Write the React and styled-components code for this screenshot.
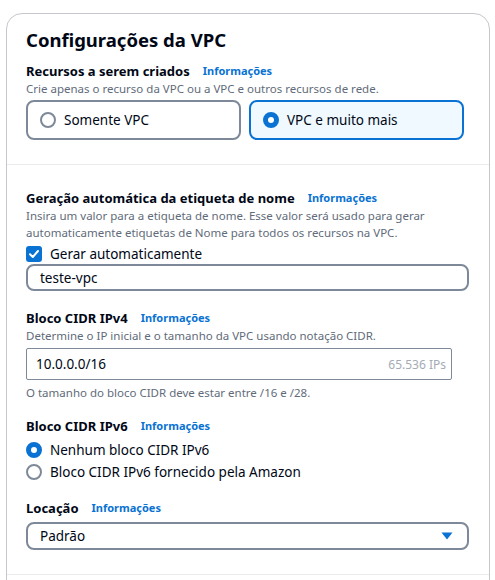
import React from "react";
import styled, { createGlobalStyle } from "styled-components";

const Global = createGlobalStyle`
  html, body { margin: 0; padding: 0; background: #ffffff; }
  body { font-family: "Noto Sans", "Open Sans", sans-serif; color: #000716; }
  * { box-sizing: border-box; }
`;

const Page = styled.div`
  padding: 13px 0 0 6px;
  width: 495px;
  height: 580px;
  overflow: hidden;
`;

const Card = styled.div`
  width: 484px;
  border: 1px solid #c6c6cd;
  border-radius: 16px;
  background: #fff;
`;

const Section = styled.div`
  padding: ${(p) => p.$pad || "0 19px"};
  border-bottom: ${(p) => (p.$divider ? "1px solid #e9ebed" : "none")};
`;

const Title = styled.h2`
  margin: 0;
  font-size: 18.5px;
  font-weight: 700;
  line-height: 24px;
  color: #000716;
`;

const Field = styled.div`
  display: flex;
  flex-direction: column;
  margin-top: ${(p) => p.$mt || 0}px;
`;

const LabelRow = styled.div`
  display: flex;
  align-items: center;
  gap: 13px;
  height: 18px;
  line-height: 18px;
`;

const Label = styled.span`
  font-size: 13px;
  font-weight: 700;
  color: #000716;
`;

const Info = styled.a`
  font-size: 11px;
  font-weight: 700;
  color: #0972d3;
  text-decoration: none;
`;

const Desc = styled.div`
  font-size: 11.5px;
  line-height: 17px;
  color: #5f6b7a;
  margin-top: ${(p) => p.$mt || 0}px;
`;

const Tiles = styled.div`
  display: grid;
  grid-template-columns: 215px 215px;
  gap: 8px;
  margin-top: 3px;
`;

const Tile = styled.div`
  display: flex;
  align-items: center;
  gap: 8px;
  height: 40px;
  padding: 0 12px;
  border: 2px solid ${(p) => (p.$checked ? "#0972d3" : "#7d8998")};
  border-radius: 8px;
  background: ${(p) => (p.$checked ? "#f0f9ff" : "#fff")};
  font-size: 13.5px;
  color: #000716;
`;

const RadioDot = styled.span`
  flex: none;
  width: 16px;
  height: 16px;
  border-radius: 50%;
  border: ${(p) => (p.$checked ? "5px solid #0972d3" : "2px solid #7d8998")};
  background: #fff;
`;

const OptionList = styled.div`
  display: flex;
  flex-direction: column;
  gap: 2px;
  margin-top: ${(p) => p.$mt || 0}px;
`;

const Option = styled.label`
  display: flex;
  align-items: center;
  gap: 8px;
  height: 20px;
  font-size: 13.5px;
  line-height: 20px;
  color: #000716;
`;

const CheckBox = styled.span`
  flex: none;
  width: 16px;
  height: 16px;
  border-radius: 3px;
  background: #0972d3;
  display: flex;
  align-items: center;
  justify-content: center;
`;

const RoundInput = styled.div`
  display: flex;
  align-items: center;
  height: ${(p) => p.$h || 27}px;
  width: 443px;
  padding: 0 12px;
  border: 2px solid #7d8998;
  border-radius: 8px;
  font-size: 13.5px;
  color: #000716;
  margin-top: ${(p) => p.$mt || 0}px;
`;

const SquareInput = styled.div`
  display: flex;
  align-items: center;
  justify-content: space-between;
  height: 32px;
  width: 426px;
  padding: 0 5px 0 9px;
  border: 1px solid #7d8998;
  border-radius: 2px;
  font-size: 13.5px;
  color: #000716;
  margin-top: 4px;
`;

const Hint = styled.span`
  font-size: 12px;
  color: #a4abb5;
`;

const Caret = styled.svg`
  margin-left: auto;
  margin-right: 2px;
`;

export default function App() {
  return (
    <>
      <Global />
      <Page>
        <Card>
          <Section $pad="14px 19px 24px" $divider>
            <Title>Configurações da VPC</Title>
            <Field $mt={10}>
              <LabelRow>
                <Label>Recursos a serem criados</Label>
                <Info>Informações</Info>
              </LabelRow>
              <Desc>Crie apenas o recurso da VPC ou a VPC e outros recursos de rede.</Desc>
              <Tiles>
                <Tile>
                  <RadioDot />
                  Somente VPC
                </Tile>
                <Tile $checked>
                  <RadioDot $checked />
                  VPC e muito mais
                </Tile>
              </Tiles>
            </Field>
          </Section>
          <Section $pad="24px 19px 24px" $divider>
            <Field>
              <LabelRow>
                <Label>Geração automática da etiqueta de nome</Label>
                <Info>Informações</Info>
              </LabelRow>
              <Desc>
                Insira um valor para a etiqueta de nome. Esse valor será usado para gerar
                automaticamente etiquetas de Nome para todos os recursos na VPC.
              </Desc>
              <OptionList $mt={3}>
                <Option>
                  <CheckBox>
                    <svg width="12" height="12" viewBox="0 0 12 12">
                      <path d="M2 6.2 L4.8 9 L10 3" fill="none" stroke="#fff" strokeWidth="2" strokeLinecap="round" strokeLinejoin="round" />
                    </svg>
                  </CheckBox>
                  Gerar automaticamente
                </Option>
              </OptionList>
              <RoundInput>teste-vpc</RoundInput>
            </Field>
            <Field $mt={18}>
              <LabelRow>
                <Label>Bloco CIDR IPv4</Label>
                <Info>Informações</Info>
              </LabelRow>
              <Desc>Determine o IP inicial e o tamanho da VPC usando notação CIDR.</Desc>
              <SquareInput>
                10.0.0.0/16
                <Hint>65.536 IPs</Hint>
              </SquareInput>
              <Desc $mt={4}>O tamanho do bloco CIDR deve estar entre /16 e /28.</Desc>
            </Field>
            <Field $mt={16}>
              <LabelRow>
                <Label>Bloco CIDR IPv6</Label>
                <Info>Informações</Info>
              </LabelRow>
              <OptionList $mt={5}>
                <Option>
                  <RadioDot $checked />
                  Nenhum bloco CIDR IPv6
                </Option>
                <Option>
                  <RadioDot />
                  Bloco CIDR IPv6 fornecido pela Amazon
                </Option>
              </OptionList>
            </Field>
            <Field $mt={17}>
              <LabelRow>
                <Label>Locação</Label>
                <Info>Informações</Info>
              </LabelRow>
              <RoundInput $mt={5} $h={28}>
                Padrão
                <Caret width="12" height="8" viewBox="0 0 12 8">
                  <path d="M0.5 0.5 L11.5 0.5 L6 7.5 Z" fill="#0972d3" />
                </Caret>
              </RoundInput>
            </Field>
          </Section>
          <Section $pad="20px">&nbsp;</Section>
        </Card>
      </Page>
    </>
  );
}
